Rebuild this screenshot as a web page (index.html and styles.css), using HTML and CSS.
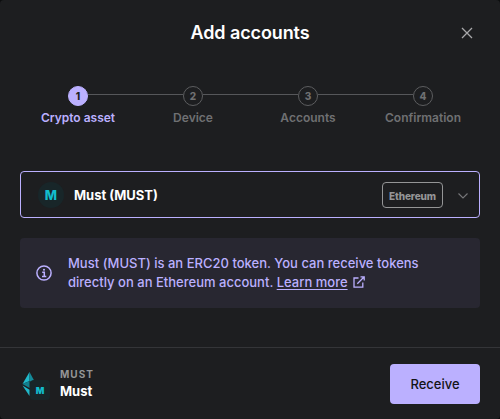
FILE: index.html
```html
<!DOCTYPE html>
<html lang="en">
<head>
<meta charset="utf-8">
<title>Add accounts</title>
<link rel="stylesheet" href="styles.css">
</head>
<body>
<main class="modal">
  <header class="header">
    <h1 class="title">Add accounts</h1>
    <button class="close" aria-label="Close">
      <svg width="12" height="12" viewBox="0 0 12 12"><path d="M1 1L11 11M11 1L1 11"/></svg>
    </button>
  </header>
  <ol class="steps">
    <li class="step active"><div class="track"><span class="line none"></span><span class="dot">1</span><span class="line"></span></div><span class="label">Crypto asset</span></li>
    <li class="step"><div class="track"><span class="line"></span><span class="dot">2</span><span class="line"></span></div><span class="label">Device</span></li>
    <li class="step"><div class="track"><span class="line"></span><span class="dot">3</span><span class="line"></span></div><span class="label">Accounts</span></li>
    <li class="step"><div class="track"><span class="line"></span><span class="dot">4</span><span class="line none"></span></div><span class="label">Confirmation</span></li>
  </ol>
  <div class="select">
    <span class="token">M</span>
    <span class="name">Must (MUST)</span>
    <span class="network">Ethereum</span>
    <svg class="chevron" width="12" height="8" viewBox="0 0 12 8"><path d="M1.500 1.500L6 6L10.500 1.500"/></svg>
  </div>
  <div class="info">
    <svg class="info-icon" width="16" height="16" viewBox="0 0 16 16"><circle cx="8" cy="8" r="7.100"/><path d="M6.200 7.300H8.300V11.200M6 11.400H10.300"/><circle class="fill" cx="8" cy="4.700" r="1.050"/></svg>
    <p class="message">Must (MUST) is an ERC20 token. You can receive tokens<br>directly on an Ethereum account. <a class="link">Learn more</a><svg class="external" width="12" height="12" viewBox="0 0 12 12"><path d="M5.500 2H1V11.200H9.800V6.500M7.500 .8H11.200V4.500M11 1L4.300 7.700"/></svg></p>
  </div>
  <footer class="footer">
    <div class="coin">
      <svg class="eth" width="14" height="24" viewBox="0 0 14 24"><path fill="#20b9ca" d="M7.500 0L.5 12L7.500 9Z"/><path fill="#148a99" d="M7.500 0V9L14 12Z"/><path fill="#127e8c" d="M.5 12L7.500 9V16Z"/><path fill="#20b9ca" d="M.5 13.500L7.500 17.700V24Z"/></svg>
      <span class="badge">M</span>
    </div>
    <div class="currency">
      <span class="ticker">MUST</span>
      <span class="coin-name">Must</span>
    </div>
    <button class="receive">Receive</button>
  </footer>
</main>
</body>
</html>
```
FILE: styles.css
```css
* { box-sizing: border-box; }
body {
  margin: 0;
  background: #0c0d0e;
  font-family: Inter, "Liberation Sans", sans-serif;
  color: #fff;
}
.modal {
  display: flex;
  flex-direction: column;
  width: 500px;
  height: 419px;
  padding: 0 20px;
  border-radius: 4px;
  background: #1d1e20;
}
.header {
  display: grid;
  grid-template-columns: 26px 1fr 26px;
  align-items: center;
  height: 66px;
}
.title {
  grid-column: 2;
  margin: 0;
  text-align: center;
  font-size: 18px;
  font-weight: 600;
  line-height: 22px;
  letter-spacing: -0.1px;
}
button {
  padding: 0;
  border: 0;
  font-family: inherit;
}
.close {
  display: flex;
  justify-content: center;
  background: none;
}
svg {
  fill: none;
  stroke: #a8a8aa;
  stroke-width: 1.3;
}
.steps {
  display: grid;
  grid-template-columns: repeat(4, 115px);
  margin: 20px 0 0;
  padding: 0 0 0 0.5px;
  list-style: none;
}
.step { text-align: center; color: #6f7072; }
.track { display: flex; align-items: flex-start; height: 20px; }
.line { flex: 1; height: 1px; margin-top: 8px; background: #56575a; }
.none { background: none; }
.dot {
  width: 20px;
  height: 20px;
  border: 1px solid #5c5d5f;
  border-radius: 50%;
  font-size: 10px;
  font-weight: 800;
  line-height: 19px;
}
.label {
  display: block;
  margin-top: 3px;
  font-size: 12px;
  font-weight: 600;
  line-height: 18px;
}
.active { color: #bbb0ff; }
.active .dot { border-color: #bbb0ff; background: #bbb0ff; color: #1d1e20; }
.select {
  display: flex;
  align-items: center;
  height: 47px;
  margin-top: 44px;
  padding: 0 10px 0 17px;
  border: 1px solid #bbb0ff;
  border-radius: 4px;
}
.token {
  width: 26px;
  height: 26px;
  border-radius: 50%;
  background: #182629;
  color: #12bdcd;
  font-size: 13px;
  font-weight: 800;
  line-height: 26px;
  text-align: center;
}
.name { flex: 1; margin-left: 10px; font-size: 13px; font-weight: 700; }
.network {
  width: 61px;
  height: 26px;
  border: 1px solid #949596;
  border-radius: 4px;
  color: #949596;
  font-size: 10px;
  font-weight: 800;
  line-height: 26px;
  letter-spacing: -0.1px;
  text-align: center;
}
.chevron { margin: 3px 0 0 14px; stroke: #77787a; stroke-width: 1.1; }
.info {
  display: flex;
  align-items: center;
  gap: 16px;
  height: 70px;
  margin-top: 20px;
  padding-left: 16px;
  border-radius: 4px;
  background: #282731;
}
.info-icon { stroke: #bbb0ff; stroke-width: 1.5; }
.fill { fill: #bbb0ff; stroke: none; }
.message {
  margin: 0;
  color: #bbb0ff;
  font-size: 13px;
  font-weight: 500;
  line-height: 19px;
  letter-spacing: 0.01px;
  white-space: nowrap;
}
.link { text-decoration: underline; text-underline-offset: 2px; }
.external { margin-left: 5px; vertical-align: -1px; stroke: #bbb0ff; }
.footer {
  display: flex;
  align-items: center;
  height: 72px;
  margin: auto -20px 0;
  padding: 0 20px;
  border-top: 1px solid #343538;
}
.coin { position: relative; width: 40px; height: 24px; padding-left: 2px; }
.eth { display: block; stroke: none; }
.badge {
  position: absolute;
  left: 10px;
  top: 8px;
  width: 20px;
  height: 20px;
  border-radius: 4px;
  background: #182629;
  color: #12bdcd;
  font-size: 9px;
  font-weight: 900;
  line-height: 21px;
  text-align: center;
}
.currency { display: flex; flex: 1; flex-direction: column; }
.ticker {
  color: #949596;
  font-size: 10px;
  font-weight: 700;
  line-height: 15px;
  letter-spacing: 1px;
}
.coin-name { font-size: 13px; font-weight: 700; line-height: 19px; }
.receive {
  width: 90px;
  height: 40px;
  border-radius: 4px;
  background: #bbb0ff;
  color: #141416;
  font-size: 13px;
  font-weight: 500;
}
```
